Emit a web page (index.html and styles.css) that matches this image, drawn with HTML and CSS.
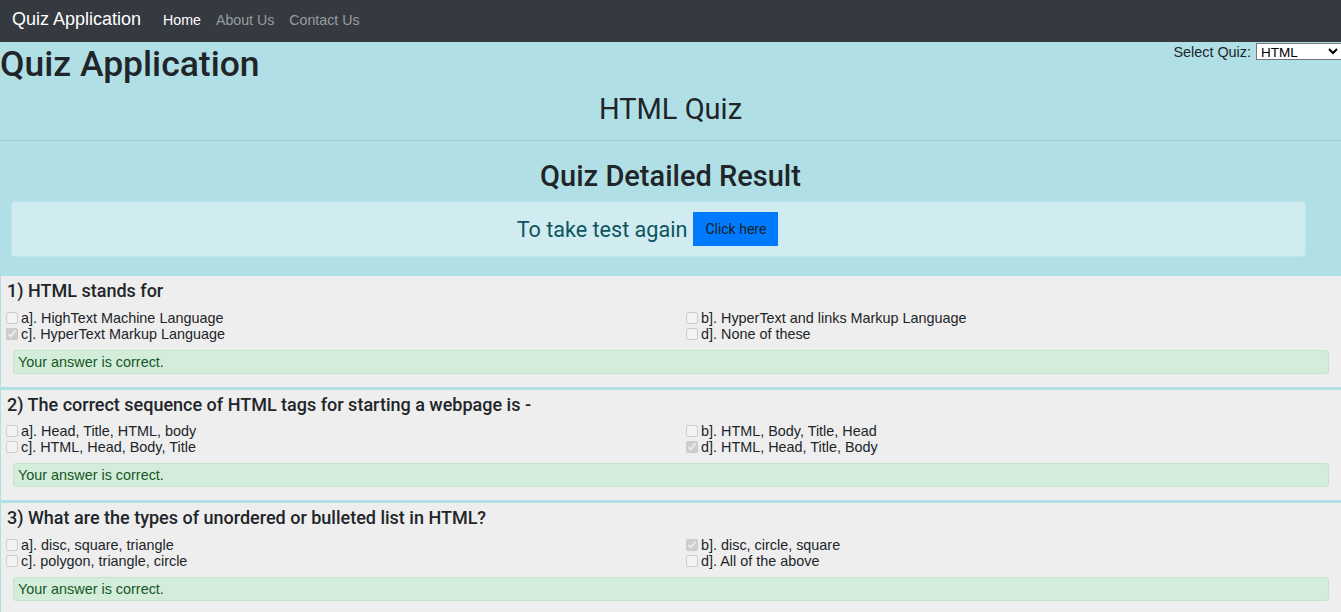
FILE: index.html
```html
<!DOCTYPE html>
<html lang="en">
<head>
<meta charset="utf-8">
<title>Quiz Application</title>
<link rel="stylesheet" href="styles.css">
</head>
<body>
<nav class="navbar">
  <span class="brand">Quiz Application</span>
  <a class="nav-link active" href="#">Home</a>
  <a class="nav-link" href="#">About Us</a>
  <a class="nav-link" href="#">Contact Us</a>
</nav>

<header class="top">
  <div class="title-row">
    <h1 class="app-title">Quiz Application</h1>
    <div class="quiz-select">
      <label for="quiz">Select Quiz:</label>
      <select id="quiz" class="select"><option>HTML</option><option>CSS</option><option>JavaScript</option></select>
    </div>
  </div>
  <h2 class="quiz-name">HTML Quiz</h2>
  <hr class="sep">
  <h2 class="result-title">Quiz Detailed Result</h2>
  <div class="retake">
    <span class="retake-text">To take test again</span>
    <button class="btn">Click here</button>
  </div>
</header>

<main>
  <section class="card">
    <h5 class="q-title">1) HTML stands for</h5>
    <div class="options">
      <label class="opt"><input type="checkbox" disabled>a]. HighText Machine Language</label>
      <label class="opt"><input type="checkbox" disabled>b]. HyperText and links Markup Language</label>
      <label class="opt"><input type="checkbox" disabled checked>c]. HyperText Markup Language</label>
      <label class="opt"><input type="checkbox" disabled>d]. None of these</label>
    </div>
    <div class="alert">Your answer is correct.</div>
  </section>

  <section class="card">
    <h5 class="q-title">2) The correct sequence of HTML tags for starting a webpage is -</h5>
    <div class="options">
      <label class="opt"><input type="checkbox" disabled>a]. Head, Title, HTML, body</label>
      <label class="opt"><input type="checkbox" disabled>b]. HTML, Body, Title, Head</label>
      <label class="opt"><input type="checkbox" disabled>c]. HTML, Head, Body, Title</label>
      <label class="opt"><input type="checkbox" disabled checked>d]. HTML, Head, Title, Body</label>
    </div>
    <div class="alert">Your answer is correct.</div>
  </section>

  <section class="card">
    <h5 class="q-title">3) What are the types of unordered or bulleted list in HTML?</h5>
    <div class="options">
      <label class="opt"><input type="checkbox" disabled>a]. disc, square, triangle</label>
      <label class="opt"><input type="checkbox" disabled checked>b]. disc, circle, square</label>
      <label class="opt"><input type="checkbox" disabled>c]. polygon, triangle, circle</label>
      <label class="opt"><input type="checkbox" disabled>d]. All of the above</label>
    </div>
    <div class="alert">Your answer is correct.</div>
  </section>
</main>
</body>
</html>
```

FILE: styles.css
```css
* { box-sizing: border-box; }

body {
  margin: 0;
  background: #b0e0e6;
  font-family: "Liberation Sans", Arial, sans-serif;
  font-size: 14.4px;
  color: #212529;
}

.navbar {
  height: 42px;
  background: #343a40;
  display: flex;
  align-items: center;
  padding: 0 0 3px 12px;
  gap: 15px;
}

.brand {
  color: #fff;
  font-size: 18px;
  margin-right: 7px;
}

.nav-link {
  color: #9a9da0;
  font-size: 14.2px;
  text-decoration: none;
}

.nav-link.active { color: #fff; }

.title-row {
  display: flex;
  justify-content: space-between;
  align-items: flex-start;
}

.app-title,
.quiz-name,
.result-title,
.q-title {
  font-family: Roboto, "Liberation Sans", sans-serif;
  line-height: 1.2;
  margin: 0;
  color: #212529;
}

.app-title {
  font-size: 35.5px;
  font-weight: 500;
  padding-top: 1px;
}

.quiz-select {
  display: flex;
  align-items: center;
  gap: 5px;
  margin: 1px -1px 0 0;
}

.select {
  width: 86px;
  height: 17px;
  font-family: "Liberation Sans", Arial, sans-serif;
  font-size: 13.5px;
  padding: 0;
  border: 1px solid #767676;
  border-radius: 0;
  background: #fff;
  color: #000;
}

.quiz-name {
  font-size: 29px;
  font-weight: 400;
  text-align: center;
  margin-top: 6px;
}

.sep {
  margin: 14px 0 0;
  border: 0;
  border-top: 1px solid rgba(0, 0, 0, 0.1);
}

.result-title {
  font-size: 29px;
  font-weight: 500;
  text-align: center;
  margin-top: 18px;
}

.retake {
  margin: 7px 35px 19px 11px;
  height: 56px;
  padding-right: 22px;
  background: #d1ecf1;
  border: 1px solid #bee5eb;
  border-radius: 4px;
  display: flex;
  align-items: center;
  justify-content: center;
  gap: 6px;
}

.retake-text {
  font-family: Roboto, "Liberation Sans", sans-serif;
  font-size: 21.6px;
  color: #0c5460;
}

.btn {
  height: 34px;
  padding: 0 12px;
  border: 0;
  background: #007bff;
  color: #1b1e21;
  font-family: Roboto, "Liberation Sans", sans-serif;
  font-size: 14px;
}

.card {
  background: #eeeeee;
  margin: 0 0 3px 1px;
  padding: 4px 6px 13px 5px;
}

.q-title {
  font-size: 18px;
  font-weight: 500;
  margin-left: 1px;
}

.options {
  display: grid;
  grid-template-columns: 680px 1fr;
  margin-top: 8px;
}

.opt {
  display: flex;
  align-items: center;
  height: 16px;
  line-height: 16px;
  color: #212529;
}

.opt input {
  width: 12px;
  height: 12px;
  margin: 0 3px 0 0;
}

.alert {
  margin: 8px 6px 0 7px;
  padding: 3px 4px;
  line-height: 16px;
  background: #d4edda;
  border: 1px solid #c3e6cb;
  border-radius: 3px;
  color: #155724;
}
```
